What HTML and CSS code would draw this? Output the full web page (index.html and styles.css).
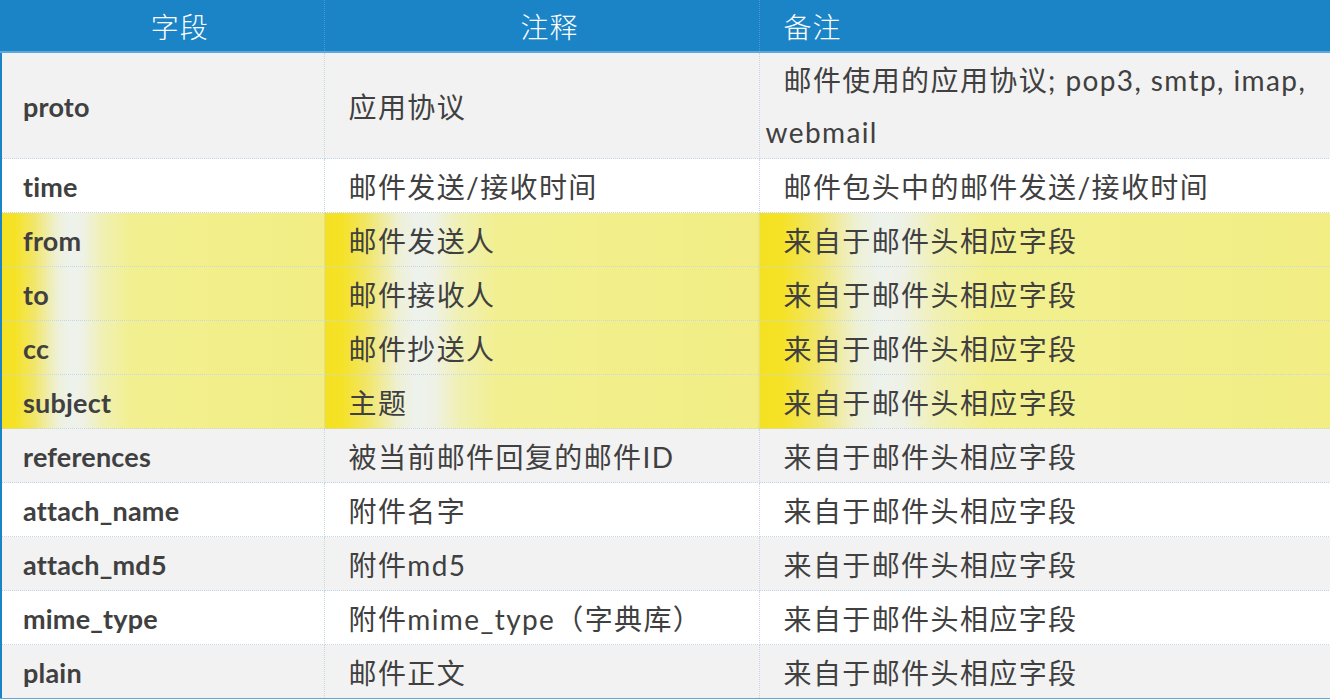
FILE: index.html
```html
<!DOCTYPE html>
<html lang="zh-CN">
<head>
<meta charset="utf-8">
<title>邮件字段</title>
<link rel="stylesheet" href="styles.css">
</head>
<body>
<table class="grid">
  <colgroup>
    <col class="c1">
    <col class="c2">
    <col class="c3">
  </colgroup>
  <thead>
    <tr class="head">
      <th class="h1">字段</th>
      <th class="h2">注释</th>
      <th class="h3">备注</th>
    </tr>
  </thead>
  <tbody>
    <tr class="gray">
      <td class="f">proto</td>
      <td class="n">应用协议</td>
      <td class="r indent">邮件使用的应用协议; pop3, smtp, imap, webmail</td>
    </tr>
    <tr class="white">
      <td class="f">time</td>
      <td class="n">邮件发送/接收时间</td>
      <td class="r">邮件包头中的邮件发送/接收时间</td>
    </tr>
    <tr class="hl">
      <td class="f">from</td>
      <td class="n">邮件发送人</td>
      <td class="r">来自于邮件头相应字段</td>
    </tr>
    <tr class="hl">
      <td class="f">to</td>
      <td class="n">邮件接收人</td>
      <td class="r">来自于邮件头相应字段</td>
    </tr>
    <tr class="hl">
      <td class="f">cc</td>
      <td class="n">邮件抄送人</td>
      <td class="r">来自于邮件头相应字段</td>
    </tr>
    <tr class="hl">
      <td class="f">subject</td>
      <td class="n">主题</td>
      <td class="r">来自于邮件头相应字段</td>
    </tr>
    <tr class="gray">
      <td class="f">references</td>
      <td class="n">被当前邮件回复的邮件ID</td>
      <td class="r">来自于邮件头相应字段</td>
    </tr>
    <tr class="white">
      <td class="f">attach_name</td>
      <td class="n">附件名字</td>
      <td class="r">来自于邮件头相应字段</td>
    </tr>
    <tr class="gray">
      <td class="f">attach_md5</td>
      <td class="n">附件md5</td>
      <td class="r">来自于邮件头相应字段</td>
    </tr>
    <tr class="white">
      <td class="f">mime_type</td>
      <td class="n">附件mime_type（字典库）</td>
      <td class="r">来自于邮件头相应字段</td>
    </tr>
    <tr class="gray last">
      <td class="f">plain</td>
      <td class="n">邮件正文</td>
      <td class="r">来自于邮件头相应字段</td>
    </tr>
  </tbody>
</table>
</body>
</html>
```

FILE: styles.css
```css
html, body {
  margin: 0;
  padding: 0;
  background: #ffffff;
}

.grid {
  width: 1330px;
  border-collapse: collapse;
  table-layout: fixed;
  font-family: "Lato", "Noto Sans CJK SC", sans-serif;
  color: #404040;
  border-left: 2px solid #1a84c7;
  border-bottom: 2px solid #5aa8dc;
}

.c1 { width: 323px; }
.c2 { width: 435px; }
.c3 { width: 572px; }

.head {
  background: #1a84c7;
  height: 52px;
}

.head th {
  color: #ffffff;
  font-family: "Noto Sans CJK SC", sans-serif;
  font-weight: 300;
  font-size: 28px;
  letter-spacing: 1px;
  height: 50px;
  padding: 0;
  line-height: 50px;
  border-bottom: 2px solid #5aa8dc;
  border-right: 1px dotted #4a9ad4;
  vertical-align: middle;
}

.h1 { text-align: center; padding-left: 34px !important; }
.h2 { text-align: center; padding-left: 16px !important; }
.h3 { text-align: left; padding-left: 24px !important; border-right: none !important; }

td {
  padding: 3px 0 0 0;
  line-height: 50px;
  vertical-align: middle;
  border-bottom: 1px dotted #c6d8e6;
  border-right: 1px dotted #c6d8e6;
  font-size: 28px;
}

td.r { border-right: none; }

.last td { border-bottom: none; }

.f {
  font-weight: 700;
  font-size: 27px;
  padding-left: 21px;
  letter-spacing: 0.2px;
}

.n, .r {
  font-weight: 400;
  letter-spacing: 1.4px;
}

.n { padding-left: 24px; }
.r { padding-left: 24px; }

.r.indent {
  padding-left: 6px;
  padding-top: 1px;
  line-height: 52px;
  text-indent: 18px;
}

.gray { background: #f2f2f2; }
.white { background: #ffffff; }

.hl td {
  background: linear-gradient(to right,
    #f5e122 0%,
    #f5e226 4%,
    #f1e66a 10%,
    #eef0d4 17%,
    #edf2ec 21%,
    #eef1e6 25%,
    #f0f0b4 31%,
    #f2ef90 40%,
    #f2ee84 100%);
}
```
